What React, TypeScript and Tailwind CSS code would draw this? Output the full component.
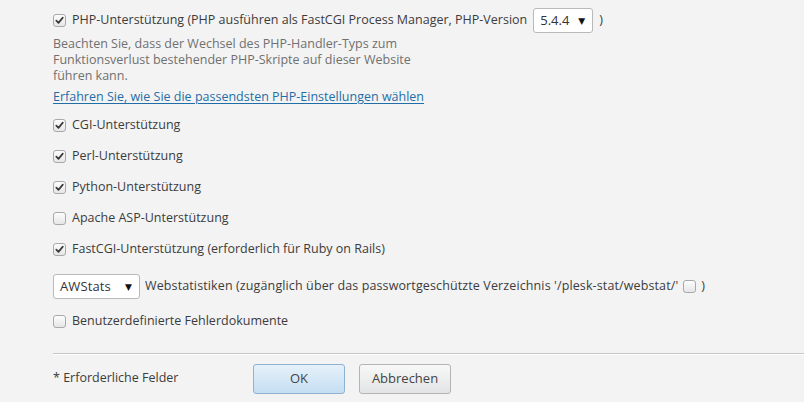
import React from "react";

function Box({ checked }: { checked: boolean }) {
  return (
    <span className="relative inline-flex h-[13px] w-[13px] shrink-0 items-center justify-center rounded-[3px] border border-[#a9a9a9] bg-gradient-to-b from-[#fdfdfd] to-[#e6e6e6]">
      {checked && (
        <svg width="9" height="9" viewBox="0 0 9 9" className="block">
          <path d="M1.3 4.6 L3.5 6.9 L7.8 1.6" fill="none" stroke="#3a3a3a" strokeWidth="1.7" strokeLinecap="round" strokeLinejoin="round" />
        </svg>
      )}
    </span>
  );
}

function Row({ checked, children }: { checked: boolean; children: React.ReactNode }) {
  return (
    <div className="flex h-[31px] items-center gap-[6px]">
      <Box checked={checked} />
      <span>{children}</span>
    </div>
  );
}

function FakeSelect({ value, width }: { value: string; width: string }) {
  return (
    <span className={`inline-flex h-[25px] items-center justify-between rounded-[3px] border border-[#b9b9b9] bg-white pl-[6px] pr-[7px] ${width}`}>
      <span className="text-[13px] text-[#333]">{value}</span>
      <span className="text-[9px] text-[#111]">▼</span>
    </span>
  );
}

export default function App() {
  return (
    <div className="min-h-[402px] w-[804px] overflow-hidden bg-[#f3f3f3] text-[12.5px] text-[#3c3c3c]" style={{ fontFamily: '"Open Sans", "DejaVu Sans", sans-serif' }}>
      <div className="pl-[53px] pt-[8px]">
        <div className="flex h-[25px] items-center gap-[6px]">
          <Box checked />
          <span>PHP-Unterstützung (PHP ausführen als FastCGI Process Manager, PHP-Version</span>
          <FakeSelect value="5.4.4" width="w-[60px]" />
          <span>)</span>
        </div>
        <div className="mt-[3px] w-[370px] text-[12.5px] leading-[16px] text-[#707070]">
          Beachten Sie, dass der Wechsel des PHP-Handler-Typs zum Funktionsverlust bestehender PHP-Skripte auf dieser Website führen kann.
        </div>
        <div className="mt-[5px] leading-[16px]">
          <a className="text-[#1f6ea8] underline underline-offset-2">Erfahren Sie, wie Sie die passendsten PHP-Einstellungen wählen</a>
        </div>
        <div className="mt-[5px]">
          <Row checked>CGI-Unterstützung</Row>
          <Row checked>Perl-Unterstützung</Row>
          <Row checked>Python-Unterstützung</Row>
          <Row checked={false}>Apache ASP-Unterstützung</Row>
          <Row checked>FastCGI-Unterstützung (erforderlich für Ruby on Rails)</Row>
        </div>
        <div className="mt-[9px] flex h-[25px] items-center gap-[5px] tracking-[0.12px]">
          <FakeSelect value="AWStats" width="w-[87px]" />
          <span>Webstatistiken (zugänglich über das passwortgeschützte Verzeichnis '/plesk-stat/webstat/'</span>
          <Box checked={false} />
          <span>)</span>
        </div>
        <div className="mt-[7px] flex h-[30px] items-center gap-[6px]">
          <Box checked={false} />
          <span>Benutzerdefinierte Fehlerdokumente</span>
        </div>
      </div>
      <div className="ml-[53px] mt-[17px] h-[2px] border-t border-[#c6c6c6] bg-white" />
      <div className="flex items-start pl-[53px] pt-[9px]">
        <div className="w-[200px] pt-[5px] text-[#3c3c3c]">* Erforderliche Felder</div>
        <button className="h-[30px] w-[92px] rounded-[3px] border border-[#8db2d2] bg-gradient-to-b from-[#e6f1fa] to-[#c5def2] text-[13px] text-[#444]">OK</button>
        <button className="ml-[14px] h-[30px] w-[92px] rounded-[3px] border border-[#b4b4b4] bg-gradient-to-b from-[#f8f8f8] to-[#e2e4e5] text-[13px] text-[#444]">Abbrechen</button>
      </div>
    </div>
  );
}
